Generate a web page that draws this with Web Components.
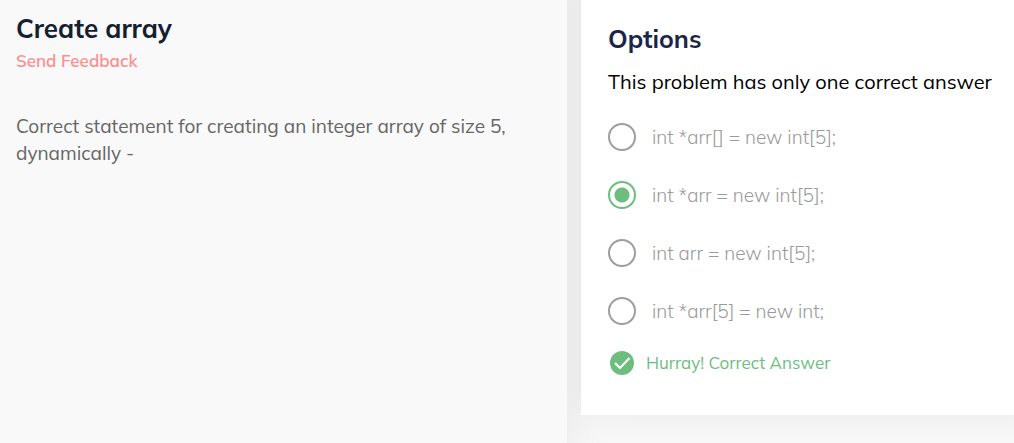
<!DOCTYPE html>
<html lang="en">
<head>
<meta charset="utf-8">
<meta name="viewport" content="width=device-width, initial-scale=1">
<title>Create array</title>
<style>
  html, body { margin: 0; min-height: 100%; }
  body {
    background: #fafafa;
    font-family: Mulish, Muli, "Open Sans", "Noto Sans", sans-serif;
  }
</style>
</head>
<body>
<quiz-page>
  <problem-panel slot="problem" heading="Create array">
    Correct statement for creating an integer array of size 5, dynamically -
  </problem-panel>
  <options-card slot="options" heading="Options" hint="This problem has only one correct answer">
    <answer-list values="int *arr[] = new int[5];|int *arr = new int[5];|int arr = new int[5];|int *arr[5] = new int;" selected="1"></answer-list>
    <result-note>Hurray! Correct Answer</result-note>
  </options-card>
</quiz-page>

<template id="quiz-page">
  <style>
    :host {
      display: grid;
      grid-template-columns: 567fr 433fr;
      gap: 14px;
      min-height: 100vh;
      overflow: hidden;
      isolation: isolate;
    }
    .options { min-width: 0; }
    .problem { display: grid; min-width: 0; }
  </style>
  <div class="problem"><slot name="problem"></slot></div>
  <div class="options"><slot name="options"></slot></div>
</template>

<template id="problem-panel">
  <style>
    :host {
      display: block;
      position: relative;
      box-sizing: border-box;
      padding: 13px 16px;
      background: #f9f9f9;
    }
    :host::before {
      content: "";
      position: absolute;
      inset: -48px 0;
      z-index: -1;
      box-shadow: 0 0 48px rgba(0, 0, 0, .08);
    }
    h1 { margin: 0; font-size: 26px; line-height: 32px; font-weight: 700; color: #14202e; }
    a { display: inline-block; font-size: 17px; line-height: 32px; font-weight: 600; color: #ff8f8f; text-decoration: none; }
    p { margin: 36px 0 0; font-size: 19px; line-height: 27px; color: #666; }
  </style>
  <h1></h1>
  <a href="#feedback">Send Feedback</a>
  <p><slot></slot></p>
</template>

<template id="options-card">
  <style>
    :host {
      display: block;
      position: relative;
      box-sizing: border-box;
      padding: 23px 16px 40px 27px;
      background: #fff;
    }
    :host::before {
      content: "";
      position: absolute;
      inset: -48px -48px 0 0;
      z-index: -1;
      box-shadow: 0 0 48px rgba(0, 0, 0, .08);
    }
    h2 { margin: 0; font-size: 25px; line-height: 32px; font-weight: 700; color: #1b2547; }
    p { margin: 11px 0 0; font-size: 20px; line-height: 32px; color: #000; }
  </style>
  <h2></h2>
  <p></p>
  <slot></slot>
</template>

<template id="answer-list">
  <style>
    :host { display: block; margin-top: 10px; }
    fieldset { margin: 0; padding: 0; border: 0; min-width: 0; }
    label {
      display: flex;
      align-items: center;
      gap: 16px;
      min-height: 58px;
      font-size: 19px;
      line-height: 26px;
      font-weight: 300;
      color: #9a9a9a;
    }
    input {
      appearance: none;
      flex: none;
      box-sizing: border-box;
      width: 28px;
      height: 28px;
      margin: 0;
      border: 2px solid #9e9e9e;
      border-radius: 50%;
    }
    input:checked {
      border-color: #6dbd7f;
      background: radial-gradient(circle, #6dbd7f 7px, transparent 8px);
    }
  </style>
  <fieldset aria-label="Options"></fieldset>
</template>

<template id="result-note">
  <style>
    :host {
      display: flex;
      align-items: center;
      gap: 12px;
      margin-top: 11px;
      padding-left: 2px;
      font-size: 17px;
      line-height: 24px;
      color: #6dbd7f;
    }
    svg { flex: none; width: 24px; height: 24px; }
  </style>
  <svg viewBox="0 0 24 24" aria-hidden="true">
    <circle cx="12" cy="12" r="12" fill="#6dbd7f"/>
    <path d="M5 12l5 5L19.5 7" fill="none" stroke="#fff" stroke-width="2.2"/>
  </svg>
  <span><slot></slot></span>
</template>

<script>
  class TemplateElement extends HTMLElement {
    constructor() {
      super();
      this.attachShadow({ mode: "open" })
        .append(document.getElementById(this.localName).content.cloneNode(true));
    }
  }

  customElements.define("quiz-page", class extends TemplateElement {});

  customElements.define("problem-panel", class extends TemplateElement {
    connectedCallback() {
      this.shadowRoot.querySelector("h1").textContent = this.getAttribute("heading");
    }
  });

  customElements.define("options-card", class extends TemplateElement {
    connectedCallback() {
      this.shadowRoot.querySelector("h2").textContent = this.getAttribute("heading");
      this.shadowRoot.querySelector("p").textContent = this.getAttribute("hint");
    }
  });

  customElements.define("answer-list", class extends TemplateElement {
    connectedCallback() {
      const selected = Number(this.getAttribute("selected"));
      const rows = this.getAttribute("values").split("|").map((text, index) => {
        const label = document.createElement("label");
        const input = document.createElement("input");
        const caption = document.createElement("span");
        input.type = "radio";
        input.name = "answer";
        input.id = "answer-" + index;
        input.defaultChecked = index === selected;
        label.htmlFor = input.id;
        caption.textContent = text;
        label.append(input, caption);
        return label;
      });
      this.shadowRoot.querySelector("fieldset").replaceChildren(...rows);
    }
  });

  customElements.define("result-note", class extends TemplateElement {});
</script>
</body>
</html>
